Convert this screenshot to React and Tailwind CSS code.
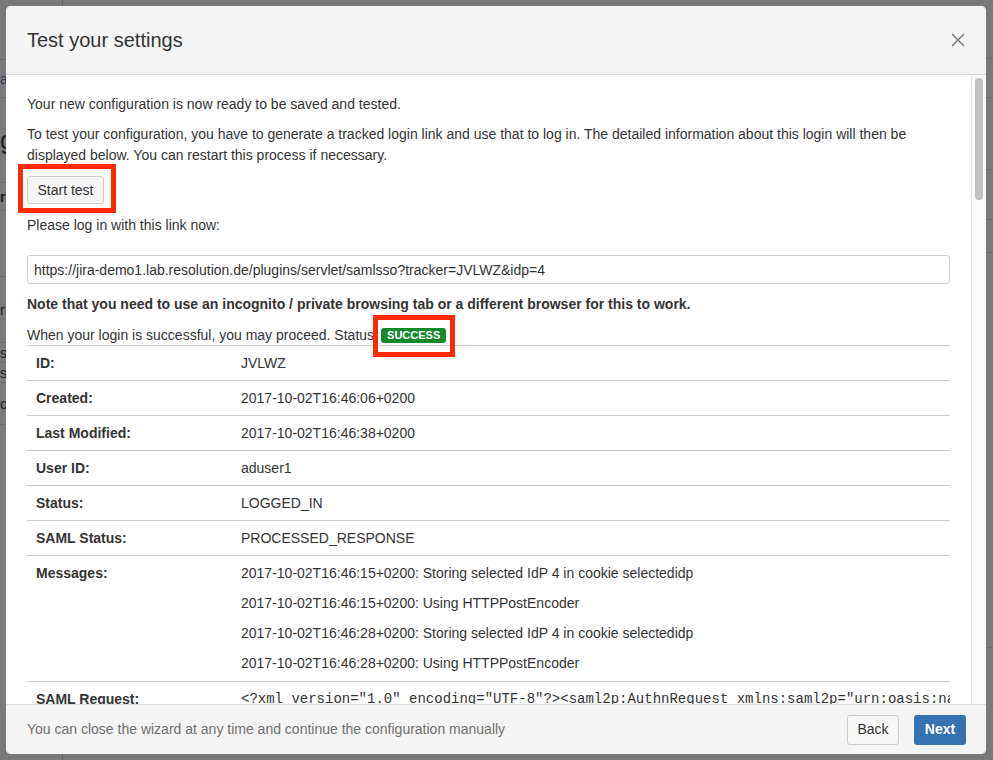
import React from "react";

const rows = [
  ["ID:", "JVLWZ"],
  ["Created:", "2017-10-02T16:46:06+0200"],
  ["Last Modified:", "2017-10-02T16:46:38+0200"],
  ["User ID:", "aduser1"],
  ["Status:", "LOGGED_IN"],
  ["SAML Status:", "PROCESSED_RESPONSE"],
];

const messages = [
  "2017-10-02T16:46:15+0200: Storing selected IdP 4 in cookie selectedidp",
  "2017-10-02T16:46:15+0200: Using HTTPPostEncoder",
  "2017-10-02T16:46:28+0200: Storing selected IdP 4 in cookie selectedidp",
  "2017-10-02T16:46:28+0200: Using HTTPPostEncoder",
];

function Background() {
  return (
    <div className="flex h-full w-full">
      <div className="flex h-full w-[63px] flex-col border-r border-[#666666] text-[14px] leading-[20px]">
        <div className="h-[60px] border-b border-[#6c6c6c]" />
        <div className="flex h-[38px] items-center border-b border-[#6c6c6c] pl-0 text-[#2e3d57]">a</div>
        <div className="flex h-[85px] items-center border-b border-[#6c6c6c] text-[26px] text-[#1f1f1f]">g</div>
        <div className="flex h-[28px] items-center border-b border-[#6c6c6c] font-bold text-[#1f1f1f]">r</div>
        <div className="h-[66px] border-b border-[#6c6c6c]" />
        <div className="flex h-[66px] items-center border-b border-[#6c6c6c] text-[#1f1f1f]">r</div>
        <div className="flex h-[20px] items-center border-b border-[#6c6c6c] text-[#1f1f1f]">s</div>
        <div className="flex h-[20px] items-center border-b border-[#6c6c6c] text-[#1f1f1f]">s</div>
        <div className="flex h-[42px] items-center border-b border-[#6c6c6c] text-[#1f1f1f]">o</div>
        <div className="flex-1" />
      </div>
      <div className="flex flex-1 flex-col">
        <div className="h-[59px] border-b border-[#6c6c6c]" />
        <div className="h-[39px] border-b border-[#6c6c6c]" />
        <div className="h-[72px] border-b border-[#6c6c6c]" />
        <div className="h-[50px] border-b border-[#6c6c6c]" />
        <div className="h-[33px] border-b border-[#6c6c6c]" />
        <div className="h-[395px] border-b border-[#6c6c6c]" />
        <div className="flex-1" />
      </div>
    </div>
  );
}

function CloseIcon() {
  return (
    <svg width="14" height="14" viewBox="0 0 14 14" fill="none">
      <path d="M1.5 1.5 L12.5 12.5 M12.5 1.5 L1.5 12.5" stroke="#707070" strokeWidth="1.4" strokeLinecap="round" />
    </svg>
  );
}

export default function App() {
  return (
    <div className="relative h-[760px] w-[993px] overflow-hidden bg-[#7a7a7a] font-['Liberation_Sans',Arial,sans-serif]">
      <Background />
      <div className="absolute left-[6px] top-[6px] flex h-[748px] w-[980px] flex-col overflow-hidden rounded-[5px] bg-white">
        {/* Header */}
        <div className="flex h-[69px] shrink-0 items-center justify-between border-b border-[#d9d9d9] bg-[#f4f4f4] pl-[21px] pr-[21px]">
          <h1 className="text-[20px] leading-[24px] text-[#333333]">Test your settings</h1>
          <CloseIcon />
        </div>
        {/* Body */}
        <div className="flex min-h-0 flex-1">
          <div className="min-w-0 flex-1 overflow-hidden px-[21px] pt-[19px] text-[14px] leading-[20px] text-[#333333]">
            <p>Your new configuration is now ready to be saved and tested.</p>
            <p className="mt-[10px] leading-[21px]">
              To test your configuration, you have to generate a tracked login link and use that to log in. The detailed information about this login will then be displayed below. You can restart this process if necessary.
            </p>
            <div className="relative mt-[10px] inline-block">
              <button className="flex h-[28px] w-[77px] items-center justify-center rounded-[3px] border border-[#cccccc] bg-[#f5f5f5] text-[14px] text-[#333333]">
                Start test
              </button>
              <div className="pointer-events-none absolute left-[-9px] top-[-12px] h-[49px] w-[98px] border-[5px] border-[#ff2a00]" />
            </div>
            <p className="mt-[11px]">Please log in with this link now:</p>
            <div className="mt-[20px] flex h-[29px] items-center rounded-[3px] border border-[#cccccc] px-[6px] text-[14px] text-[#333333]">
              https://jira-demo1.lab.resolution.de/plugins/servlet/samlsso?tracker=JVLWZ&amp;idp=4
            </div>
            <p className="mt-[10px] font-bold">
              Note that you need to use an incognito / private browsing tab or a different browser for this to work.
            </p>
            <div className="mt-[11px] flex h-[20px] items-center">
              <span>When your login is successful, you may proceed. Status</span>
              <span className="relative ml-[7px] inline-flex h-[15px] items-center rounded-[3px] bg-[#14892c] px-[6px] text-[11px] font-bold leading-[15px] text-white">
                SUCCESS
                <span className="pointer-events-none absolute left-[-8px] top-[-13px] h-[42px] w-[82px] border-[5px] border-[#ff2a00]" />
              </span>
            </div>
            <div className="mt-0">
              {rows.map(([k, v]) => (
                <div key={k} className="flex border-t border-[#cccccc] py-[7px]">
                  <div className="w-[205px] shrink-0 pl-[9px] font-bold">{k}</div>
                  <div className="flex-1 pl-[9px]">{v}</div>
                </div>
              ))}
              <div className="flex border-t border-[#cccccc] pb-[8px] pt-[7px]">
                <div className="w-[205px] shrink-0 pl-[9px] font-bold">Messages:</div>
                <div className="flex flex-1 flex-col gap-[10px] pl-[9px]">
                  {messages.map((m, i) => (
                    <div key={i}>{m}</div>
                  ))}
                </div>
              </div>
              <div className="flex border-t border-[#cccccc] py-[7px]">
                <div className="w-[205px] shrink-0 pl-[9px] font-bold">SAML Request:</div>
                <div className="min-w-0 flex-1 overflow-hidden whitespace-nowrap pl-[9px] font-['Liberation_Mono',monospace] text-[14px]">
                  {'<?xml version="1.0" encoding="UTF-8"?><saml2p:AuthnRequest xmlns:saml2p="urn:oasis:names:tc:SAML:2.0:protocol"'}
                </div>
              </div>
            </div>
          </div>
          <div className="w-[15px] shrink-0 border-l border-[#e6e6e6] bg-[#fafafa] pl-[3px] pt-[3px]">
            <div className="h-[122px] w-[8px] rounded-full bg-[#c2c2c2]" />
          </div>
        </div>
        {/* Footer */}
        <div className="flex h-[50px] shrink-0 items-center justify-between border-t border-[#dddddd] bg-[#f4f4f4] pl-[21px] pr-[20px]">
          <span className="text-[14px] text-[#707070]">You can close the wizard at any time and continue the configuration manually</span>
          <div className="flex gap-[15px]">
            <button className="flex h-[30px] w-[52px] items-center justify-center rounded-[3px] border border-[#cccccc] bg-[#f7f7f7] text-[14px] text-[#333333]">
              Back
            </button>
            <button className="flex h-[30px] w-[52px] items-center justify-center rounded-[3px] bg-[#3572b0] text-[14px] font-bold text-white">
              Next
            </button>
          </div>
        </div>
      </div>
    </div>
  );
}
